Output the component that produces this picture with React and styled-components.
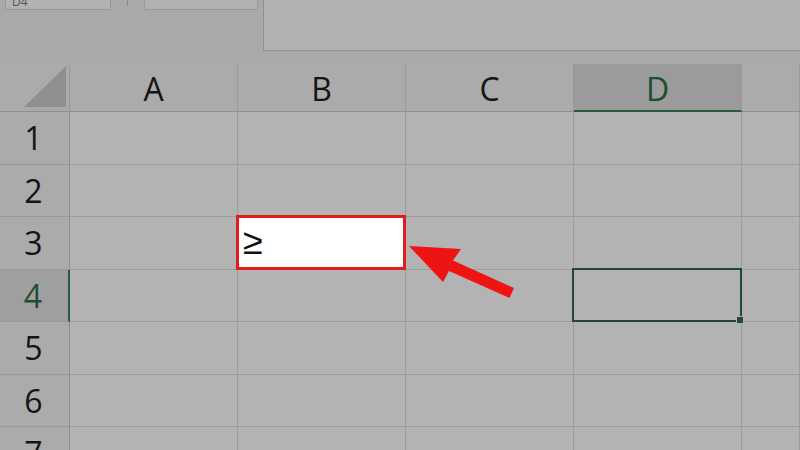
import React from "react";
import styled, { createGlobalStyle } from "styled-components";

const Global = createGlobalStyle`
  html, body { margin: 0; padding: 0; background: #aaaaaa; }
  body { width: 800px; height: 450px; overflow: hidden; font-family: "Open Sans", "Noto Sans", sans-serif; }
`;

const Screen = styled.div`
  position: relative;
  width: 800px;
  height: 450px;
  overflow: hidden;
  background: #aaaaaa;
`;

const TopBar = styled.div`
  display: flex;
  height: 64px;
  background: #a9a9a9;
`;

const Tools = styled.div`
  width: 263px;
  display: flex;
  align-items: flex-start;
  padding-left: 5px;
  box-sizing: border-box;
`;

const StubBox = styled.div`
  width: ${(p) => p.$w}px;
  height: 10px;
  background: #b2b2b2;
  border: 1px solid #999;
  border-top: none;
  box-sizing: border-box;
  overflow: hidden;
  font-size: 12px;
  line-height: 4px;
  color: #555;
  padding-left: 6px;
`;

const Sep = styled.div`
  width: 33px;
  display: flex;
  justify-content: center;
  &::after {
    content: "";
    width: 1px;
    height: 6px;
    background: #8a8a8a;
  }
`;

const FormulaArea = styled.div`
  flex: 1;
  height: 51px;
  background: #b2b2b2;
  border-left: 1px solid #8f8f8f;
  border-bottom: 1px solid #8f8f8f;
  box-sizing: border-box;
`;

const Grid = styled.div`
  display: grid;
  grid-template-columns: 70px 168px 168px 168px 168px 58px;
  grid-template-rows: 48px repeat(7, 52.5px);
`;

const Corner = styled.div`
  background: #ababab;
  border-right: 1px solid #9a9a9a;
  border-bottom: 1px solid #8e8e8e;
  box-sizing: border-box;
  display: flex;
  align-items: flex-end;
  justify-content: flex-end;
  padding: 0 3px 4px 0;
  &::after {
    content: "";
    width: 42px;
    height: 41px;
    background: #8f8f8f;
    clip-path: polygon(100% 0, 100% 100%, 0 100%);
  }
`;

const ColHead = styled.div`
  background: ${(p) => (p.$active ? "#9b9b9b" : "#ababab")};
  border-right: 1px solid #9a9a9a;
  border-bottom: ${(p) => (p.$active ? "2px solid #2a5a3c" : "1px solid #8e8e8e")};
  box-sizing: border-box;
  display: flex;
  align-items: center;
  justify-content: center;
  font-size: 32px;
  font-weight: 400;
  color: ${(p) => (p.$active ? "#1f4d33" : "#151515")};
  padding-top: 2px;
`;

const RowHead = styled.div`
  background: ${(p) => (p.$active ? "#9f9f9f" : "#ababab")};
  border-right: ${(p) => (p.$active ? "2px solid #2a5a3c" : "1px solid #8e8e8e")};
  border-bottom: 1px solid #9a9a9a;
  box-sizing: border-box;
  display: flex;
  align-items: center;
  justify-content: center;
  font-size: 32px;
  color: ${(p) => (p.$active ? "#1f4d33" : "#151515")};
  padding-right: 2px;
`;

const Cell = styled.div`
  position: relative;
  background: #b3b3b3;
  border-right: 1px solid #9d9d9d;
  border-bottom: 1px solid #9d9d9d;
  box-sizing: border-box;
`;

const EditBox = styled.div`
  position: absolute;
  inset: -2px -1px -1px -2px;
  background: #ffffff;
  border: 3px solid #e21c1c;
  display: flex;
  align-items: center;
  padding-left: 4px;
  font-family: "Liberation Sans", sans-serif;
  font-size: 36px;
  line-height: 1;
  color: #111;
  z-index: 2;
`;

const Selection = styled.div`
  position: absolute;
  inset: -2px -1px -1px -2px;
  border: 2px solid #1f4a30;
  z-index: 2;
  &::after {
    content: "";
    position: absolute;
    right: -4px;
    bottom: -4px;
    width: 6px;
    height: 6px;
    background: #1f4a30;
    border: 1px solid #b3b3b3;
  }
`;

const ArrowLayer = styled.svg`
  position: absolute;
  left: 0;
  top: 0;
  width: 800px;
  height: 450px;
  pointer-events: none;
  z-index: 5;
`;

const cols = ["A", "B", "C", "D"];

export default function App() {
  const rows = [1, 2, 3, 4, 5, 6, 7];
  return (
    <Screen>
      <Global />
      <TopBar>
        <Tools>
          <StubBox $w={106}>D4</StubBox>
          <Sep />
          <StubBox $w={114} />
        </Tools>
        <FormulaArea />
      </TopBar>
      <Grid>
        <Corner />
        {cols.map((c) => (
          <ColHead key={c} $active={c === "D"}>
            {c}
          </ColHead>
        ))}
        <ColHead />
        {rows.map((r) => (
          <React.Fragment key={r}>
            <RowHead $active={r === 4}>{r}</RowHead>
            {cols.map((c) => (
              <Cell key={c}>
                {r === 3 && c === "B" && <EditBox>≥</EditBox>}
                {r === 4 && c === "D" && <Selection />}
              </Cell>
            ))}
            <Cell />
          </React.Fragment>
        ))}
      </Grid>
      <ArrowLayer viewBox="0 0 800 450">
        <polygon
          points="409,246 461,249 453,260.5 514,288 509.5,298 449,271 443,282"
          fill="#ef1414"
        />
      </ArrowLayer>
    </Screen>
  );
}
